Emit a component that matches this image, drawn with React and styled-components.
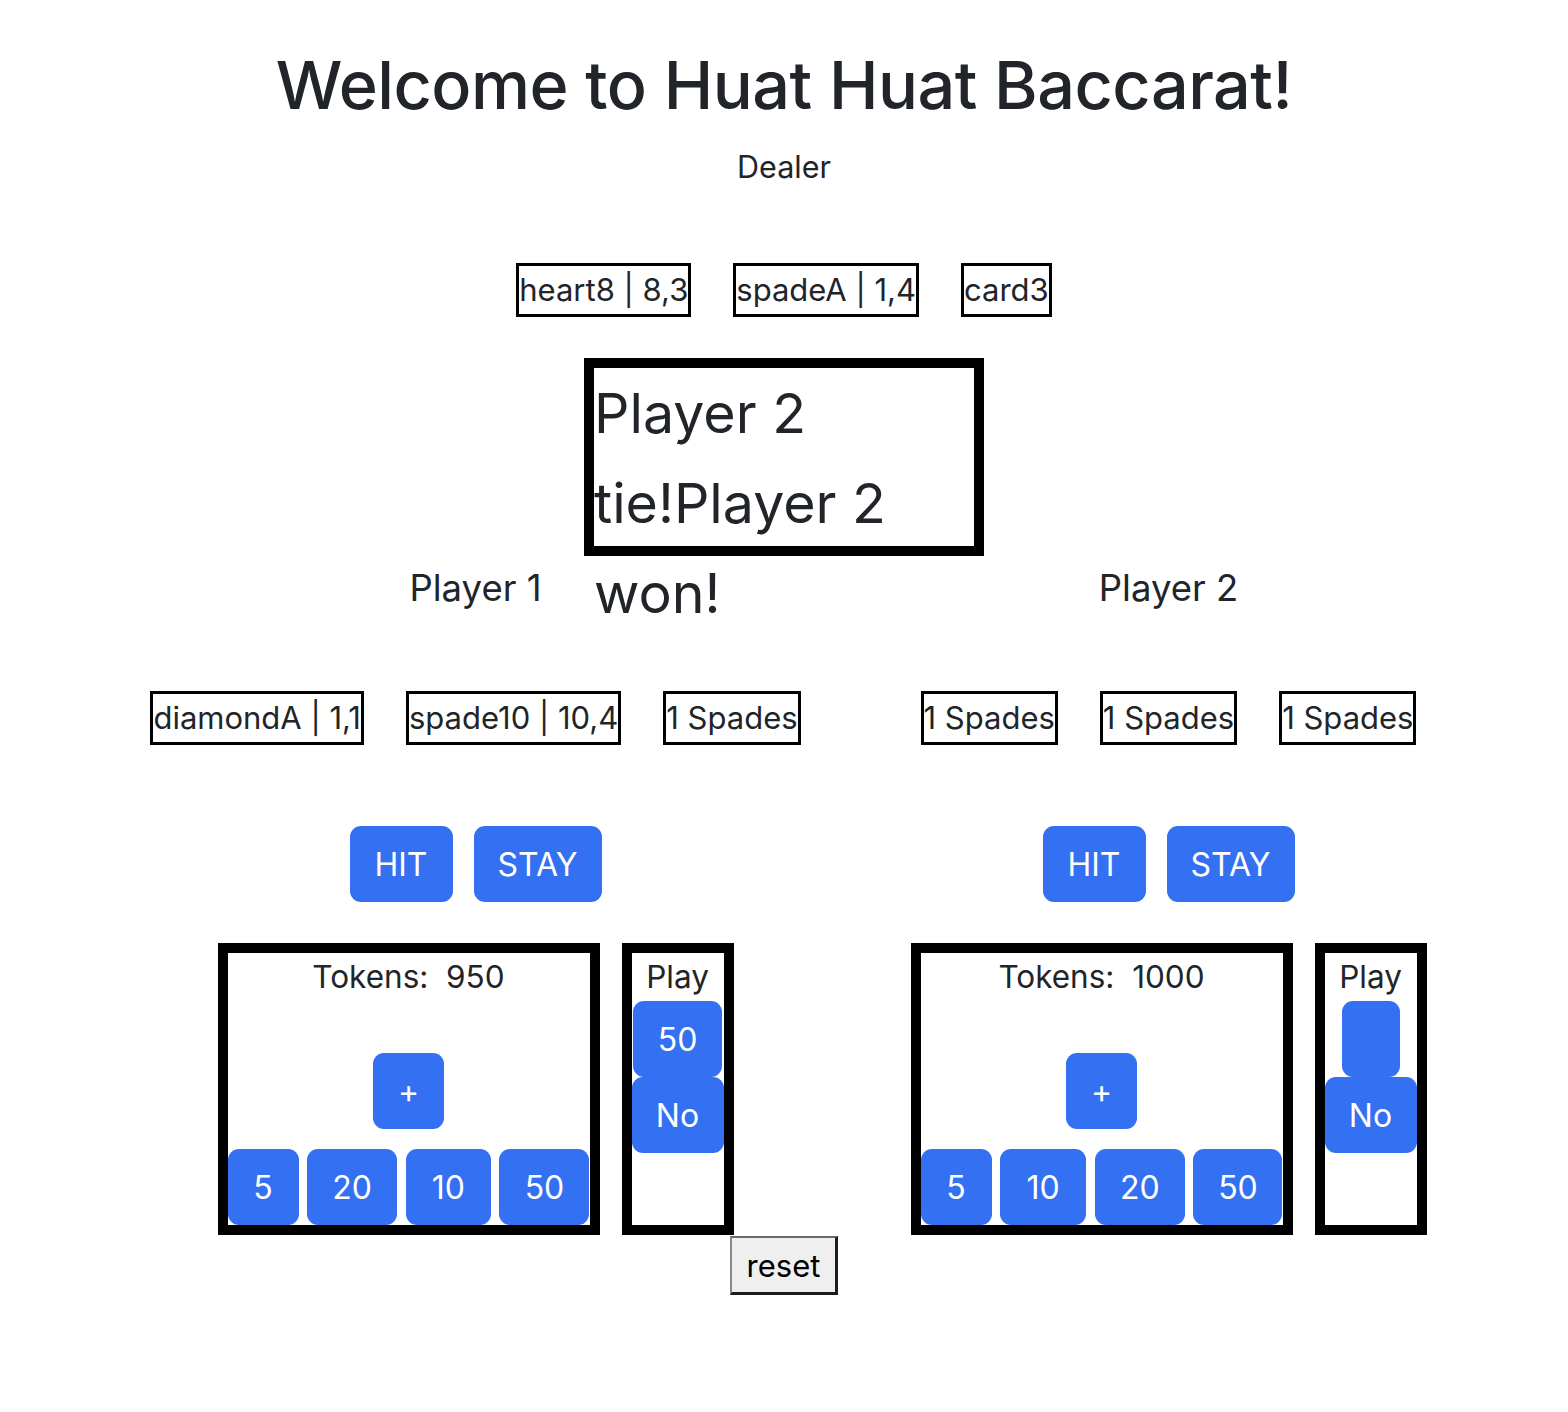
import styled, { createGlobalStyle } from 'styled-components';

const GlobalStyle = createGlobalStyle`
  body {
    margin: 0;
    background: #fff;
    color: #212529;
    font-family: Inter, "Noto Sans", "Liberation Sans", sans-serif;
  }
`;

const Page = styled.div`
  text-align: center;
  padding: 43px 0 110px;
`;

const Title = styled.h1`
  margin: 0;
  font-size: 66.5px;
  font-weight: 500;
  line-height: 85px;
  letter-spacing: -0.5px;
`;

const DealerLabel = styled.div`
  margin-top: 16px;
  font-size: 30.5px;
  line-height: 45px;
`;

const CardRow = styled.div`
  display: flex;
  justify-content: center;
  gap: 42px;
  margin-top: ${props => props.mt}px;
`;

const Card = styled.div`
  border: 3px solid #000;
  font-size: 31px;
  line-height: 48px;
  white-space: nowrap;
`;

const WinnerBox = styled.div`
  box-sizing: border-box;
  width: 400px;
  height: 198px;
  margin: 41px auto 0;
  border: 10px solid #000;
  text-align: left;
  font-size: 55.5px;
  line-height: 90px;
`;

const Players = styled.div`
  display: grid;
  grid-template-columns: 693px 693px;
  margin: 8px 0 0 129px;
`;

const PlayerCol = styled.div`
  display: flex;
  flex-direction: column;
  align-items: center;
`;

const PlayerLabel = styled.div`
  font-size: 36.5px;
  line-height: 48px;
`;

const ActionRow = styled.div`
  display: flex;
  gap: 21px;
  margin-top: 81px;
`;

const BlueButton = styled.button`
  box-sizing: border-box;
  width: ${props => props.w}px;
  height: 76px;
  padding: 0;
  border: none;
  border-radius: 11px;
  background: #3470f2;
  color: #fff;
  font-family: inherit;
  font-size: 32px;
  cursor: pointer;
`;

const BetRow = styled.div`
  display: flex;
  align-items: stretch;
  gap: 22px;
  margin-top: 41px;
`;

const TokensBox = styled.div`
  box-sizing: border-box;
  width: 382px;
  height: 292px;
  border: 10px solid #000;
  display: flex;
  flex-direction: column;
  align-items: center;
`;

const PlayBox = styled.div`
  box-sizing: border-box;
  width: 112px;
  border: 10px solid #000;
  display: flex;
  flex-direction: column;
  align-items: center;
`;

const BoxText = styled.div`
  font-size: 31.5px;
  line-height: 48px;
  white-space: pre;
`;

const PlusWrap = styled.div`
  margin-top: 52px;
`;

const ChipRow = styled.div`
  display: flex;
  justify-content: space-between;
  width: 100%;
  margin-top: 20px;
`;

const Reset = styled.button`
  display: block;
  margin: 1px auto 0;
  height: 59px;
  padding: 0 15px;
  background: #efefef;
  color: #000;
  border-style: solid;
  border-width: 2px 3px 3px 2px;
  border-color: #6a6a6a #1c1c1c #1c1c1c #8a8a8a;
  font-family: inherit;
  font-size: 31px;
  cursor: pointer;
`;

const players = [
  {
    name: 'Player 1',
    cards: ['diamondA | 1,1', 'spade10 | 10,4', '1 Spades'],
    tokens: 950,
    chips: [[5, 71], [20, 90], [10, 85], [50, 90]],
    bet: '50',
    betW: 89,
  },
  {
    name: 'Player 2',
    cards: ['1 Spades', '1 Spades', '1 Spades'],
    tokens: 1000,
    chips: [[5, 71], [10, 86], [20, 90], [50, 89]],
    bet: '',
    betW: 58,
  },
];

function PlayerArea({ p }) {
  return (
    <PlayerCol>
      <PlayerLabel>{p.name}</PlayerLabel>
      <CardRow mt={79}>
        {p.cards.map((c, i) => <Card key={i}>{c}</Card>)}
      </CardRow>
      <ActionRow>
        <BlueButton w={103}>HIT</BlueButton>
        <BlueButton w={128}>STAY</BlueButton>
      </ActionRow>
      <BetRow>
        <TokensBox>
          <BoxText>{`Tokens:  ${p.tokens}`}</BoxText>
          <PlusWrap>
            <BlueButton w={71}>+</BlueButton>
          </PlusWrap>
          <ChipRow>
            {p.chips.map(([v, w]) => <BlueButton key={v} w={w}>{v}</BlueButton>)}
          </ChipRow>
        </TokensBox>
        <PlayBox>
          <BoxText>Play</BoxText>
          <BlueButton w={p.betW}>{p.bet}</BlueButton>
          <BlueButton w={92}>No</BlueButton>
        </PlayBox>
      </BetRow>
    </PlayerCol>
  );
}

export default function App() {
  return (
    <Page>
      <GlobalStyle />
      <Title>Welcome to Huat Huat Baccarat!</Title>
      <DealerLabel>Dealer</DealerLabel>
      <CardRow mt={74}>
        <Card>heart8 | 8,3</Card>
        <Card>spadeA | 1,4</Card>
        <Card>card3</Card>
      </CardRow>
      <WinnerBox>
        <div>Player 2</div>
        <div>tie!Player 2 won!</div>
      </WinnerBox>
      <Players>
        {players.map(p => <PlayerArea key={p.name} p={p} />)}
      </Players>
      <Reset>reset</Reset>
    </Page>
  );
}
